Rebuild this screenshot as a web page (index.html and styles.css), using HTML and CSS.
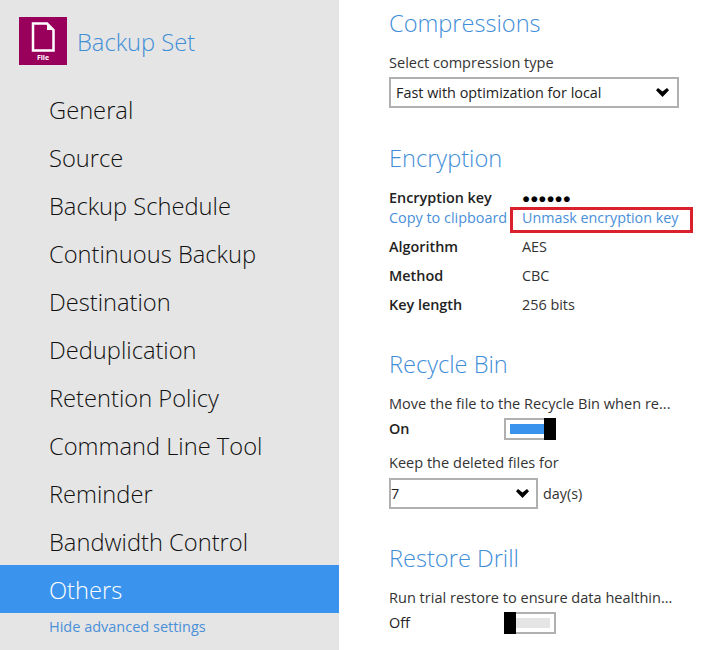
FILE: index.html
```html
<!DOCTYPE html>
<html lang="en">

<head>
    <meta charset="UTF-8">
    <title>Backup Set</title>
    <link rel="stylesheet" href="styles.css">
</head>

<body>
    <div class="side">
        <div class="brand">
            <div class="brand-icon">
                <svg width="24" height="30" viewBox="0 0 24 30">
                    <path d="M2 1.5H16L22.5 8V28.5H2Z" fill="none" stroke="#fff" stroke-width="2.5"/>
                    <path d="M16 1.5L22.5 8H16Z" fill="#fff"/>
                </svg>
                <span class="brand-file">File</span>
            </div>
            <span class="brand-name">Backup Set</span>
        </div>
        <div class="menu">
            <div class="menu-item">General</div>
            <div class="menu-item">Source</div>
            <div class="menu-item">Backup Schedule</div>
            <div class="menu-item">Continuous Backup</div>
            <div class="menu-item">Destination</div>
            <div class="menu-item">Deduplication</div>
            <div class="menu-item">Retention Policy</div>
            <div class="menu-item">Command Line Tool</div>
            <div class="menu-item">Reminder</div>
            <div class="menu-item">Bandwidth Control</div>
            <div class="menu-item active">Others</div>
        </div>
        <a class="hide-link">Hide advanced settings</a>
    </div>

    <div class="main">
        <h2 class="compress-title">Compressions</h2>
        <div class="field-label">Select compression type</div>
        <div class="select wide">
            <span>Fast with optimization for local</span>
            <svg width="13" height="9" viewBox="0 0 13 9"><path d="M0 2.2L2 0L6.5 3.6L11 0L13 2.2L6.5 9Z"/></svg>
        </div>

        <h2 class="enc-title">Encryption</h2>
        <div class="key-row">
            <b class="key-name">Encryption key</b>
            <span class="dots">●●●●●●</span>
        </div>
        <div class="link-row">
            <a class="link">Copy to clipboard</a>
            <a class="link unmask">Unmask encryption key</a>
        </div>
        <div class="info-row"><b class="key-name">Algorithm</b><span>AES</span></div>
        <div class="info-row"><b class="key-name">Method</b><span>CBC</span></div>
        <div class="info-row"><b class="key-name">Key length</b><span>256 bits</span></div>

        <h2 class="bin-title">Recycle Bin</h2>
        <div class="field-label">Move the file to the Recycle Bin when re...</div>
        <div class="toggle-row">
            <b class="toggle-label">On</b>
            <div class="toggle on"><div class="track"></div><div class="knob"></div></div>
        </div>
        <div class="field-label keep">Keep the deleted files for</div>
        <div class="days-row">
            <div class="select narrow">
                <span>7</span>
                <svg width="13" height="9" viewBox="0 0 13 9"><path d="M0 2.2L2 0L6.5 3.6L11 0L13 2.2L6.5 9Z"/></svg>
            </div>
            <span>day(s)</span>
        </div>

        <h2 class="drill-title">Restore Drill</h2>
        <div class="field-label">Run trial restore to ensure data healthin...</div>
        <div class="toggle-row">
            <span class="toggle-label">Off</span>
            <div class="toggle off"><div class="knob"></div><div class="track"></div></div>
        </div>
    </div>
</body>

</html>
```

FILE: styles.css
```css
body {
    margin: 0;
    display: flex;
    height: 650px;
    overflow: hidden;
    background-color: #fff;
    font-family: "Open Sans", sans-serif;
    font-size: 14.4px;
    color: #333;
}

.side {
    width: 339px;
    flex-shrink: 0;
    background-color: #e5e5e5;
}

.brand {
    display: flex;
    align-items: center;
    gap: 10px;
    height: 62px;
    padding: 17px 0 6px 19px;
}

.brand-icon {
    width: 48px;
    height: 48px;
    margin-bottom: 14px;
    background-color: #99005c;
    display: flex;
    flex-direction: column;
    align-items: center;
    padding-top: 5px;
    box-sizing: border-box;
}

.brand-file {
    font-size: 7px;
    font-weight: 700;
    line-height: 9px;
    margin-top: 1px;
    color: #fff;
}

.brand-name {
    font-size: 23.7px;
    font-weight: 300;
    color: #3f8ed8;
    margin-bottom: 12px;
}

.menu-item {
    height: 48px;
    line-height: 50px;
    padding-left: 49px;
    font-size: 23.7px;
    font-weight: 300;
    color: #111;
}

.menu-item.active {
    background-color: #3a94ee;
    color: #fff;
}

.hide-link {
    display: block;
    padding: 4px 0 0 49px;
    font-size: 14.5px;
    color: #4a90d9;
}

.main {
    flex: 1;
    padding-left: 50px;
}

h2 {
    margin: 0;
    font-size: 23.6px;
    font-weight: 300;
    line-height: 32px;
    color: #3f8ed8;
}

.compress-title {
    margin-top: 7px;
}

.enc-title {
    margin-top: 34px;
}

.bin-title,
.drill-title {
    margin-top: 33px;
}

.field-label {
    margin-top: 14px;
    line-height: 18px;
    padding-bottom: 2px;
    font-size: 14.55px;
}

.field-label.keep {
    margin-top: 13px;
}

.select {
    display: flex;
    align-items: center;
    justify-content: space-between;
    height: 31px;
    border: 2px solid #b0b0b0;
    box-sizing: border-box;
    margin-top: 4px;
    color: #222;
}

.select.wide {
    width: 290px;
    padding: 0 8px 0 5px;
}

.select.narrow {
    width: 149px;
    padding: 0 7px 0 0;
    margin-top: 0;
}

.key-row {
    display: flex;
    margin-top: 14px;
    line-height: 20px;
}

.key-name {
    width: 133px;
    font-weight: 600;
    color: #222;
}

.dots {
    font-size: 13.5px;
    color: #000;
}

.link-row {
    display: flex;
    align-items: flex-start;
    height: 20px;
    line-height: 20px;
}

.link {
    color: #4a90d9;
    white-space: nowrap;
}

.unmask {
    margin: -1px 0 0 3px;
    padding: 0 12px 0 9px;
    border: 3px solid #d9202c;
    height: 26px;
    line-height: 16px;
    font-size: 14.3px;
    box-sizing: border-box;
}

.info-row {
    display: flex;
    line-height: 20px;
    margin-top: 9px;
}

.toggle-row {
    display: flex;
    align-items: center;
    height: 22px;
    margin-top: 4px;
}

.toggle-label {
    width: 115px;
    padding-bottom: 2px;
    font-weight: 600;
    color: #222;
}

.toggle-row span.toggle-label {
    font-weight: 400;
}

.toggle {
    display: flex;
    align-items: stretch;
    width: 52px;
    height: 22px;
    box-sizing: border-box;
    border: 2px solid #b0b0b0;
}

.toggle.on {
    padding: 4px 0 4px 4px;
}

.toggle .knob {
    width: 12px;
    background-color: #000;
    flex-shrink: 0;
}

.toggle.on .track {
    flex: 1;
    background-color: #3a94ee;
}

.toggle.on .knob {
    margin: -6px -2px -6px 0;
}

.toggle.off .knob {
    margin: -2px 0 -2px -2px;
}

.toggle.off .track {
    flex: 1;
    margin: 4px 4px 4px 0;
    background-color: #e5e5e5;
}

.days-row {
    display: flex;
    align-items: center;
    gap: 5px;
    margin-top: 5px;
}
```
